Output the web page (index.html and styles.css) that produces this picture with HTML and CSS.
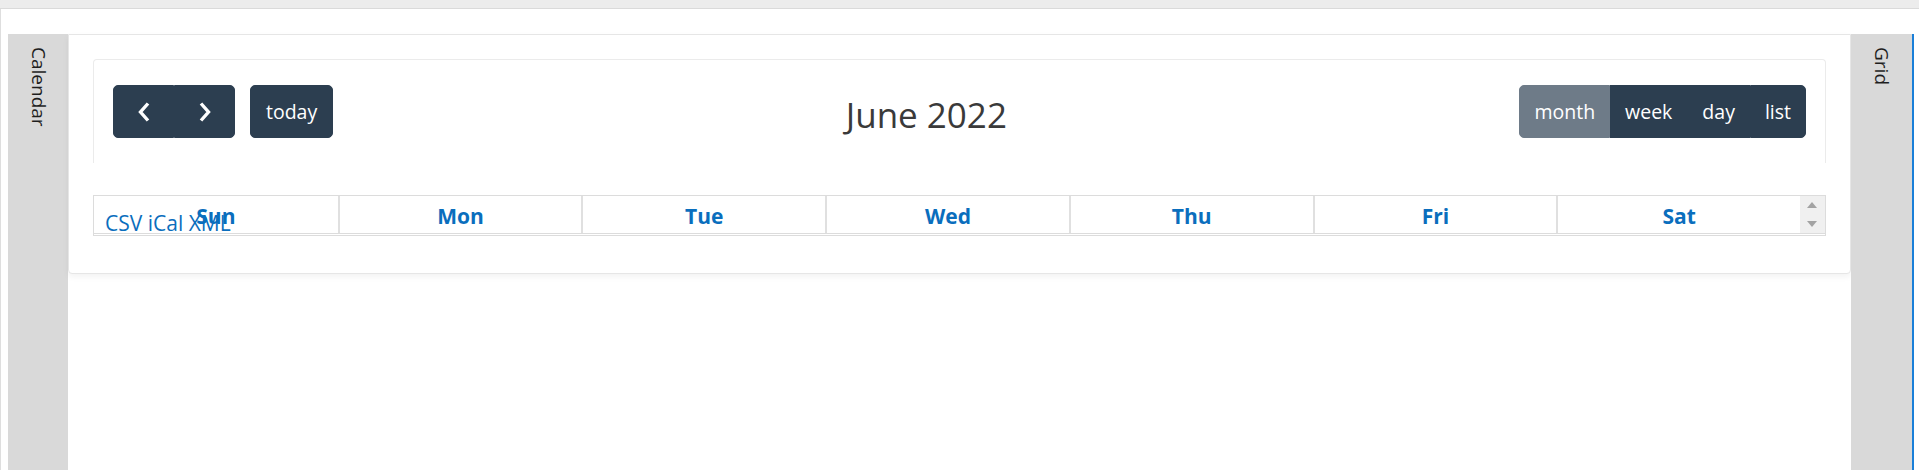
FILE: index.html
```html
<!DOCTYPE html>
<html lang="en">
<head>
<meta charset="utf-8">
<title>Calendar</title>
<link rel="stylesheet" href="styles.css">
</head>
<body>
<div class="topbar"></div>
<div class="frame">
  <aside class="tab tab-left"><span class="tab-label">Calendar</span></aside>
  <main class="main">
    <section class="panel">
      <div class="fc">
        <div class="toolbar">
          <div class="chunk">
            <div class="btn-group">
              <button class="btn icon-btn" aria-label="prev"><svg width="16" height="22" viewBox="0 0 16 22"><polyline points="12,2.5 4.5,11 12,19.5" fill="none" stroke="#fff" stroke-width="3.4"/></svg></button>
              <button class="btn icon-btn" aria-label="next"><svg width="16" height="22" viewBox="0 0 16 22"><polyline points="4,2.5 11.5,11 4,19.5" fill="none" stroke="#fff" stroke-width="3.4"/></svg></button>
            </div>
            <button class="btn today">today</button>
          </div>
          <h2 class="title">June 2022</h2>
          <div class="btn-group">
            <button class="btn view active">month</button>
            <button class="btn view">week</button>
            <button class="btn view">day</button>
            <button class="btn view">list</button>
          </div>
        </div>
        <div class="table">
          <div class="head">
            <div class="days">
              <div class="day">Sun</div>
              <div class="day">Mon</div>
              <div class="day">Tue</div>
              <div class="day">Wed</div>
              <div class="day">Thu</div>
              <div class="day">Fri</div>
              <div class="day">Sat</div>
            </div>
            <div class="scroll"><span class="arr up"></span><span class="arr down"></span></div>
          </div>
        </div>
        <div class="exports"><a href="#">CSV</a> <a href="#">iCal</a> <a href="#">XML</a></div>
      </div>
    </section>
  </main>
  <aside class="tab tab-right"><span class="tab-label">Grid</span></aside>
</div>
</body>
</html>
```
FILE: styles.css
```css
html, body {
  margin: 0;
  padding: 0;
  background: #fff;
}
body {
  font-family: "Open Sans", "Noto Sans", sans-serif;
  font-size: 19px;
  color: #212529;
}
.topbar {
  height: 8px;
  background: #ececec;
  border-bottom: 1px solid #dadada;
}
.frame {
  display: flex;
  height: 461px;
  box-sizing: border-box;
  border-left: 1px solid #dedede;
  padding: 25px 5px 0 7px;
}
.tab {
  flex: none;
  background: #d9d9d9;
  display: flex;
  justify-content: center;
  align-items: flex-start;
  padding-top: 13px;
  box-sizing: border-box;
}
.tab-left { width: 60px; }
.tab-right {
  width: 63px;
  border-right: 2px solid #1a7fd8;
}
.tab-label {
  writing-mode: vertical-rl;
  font-size: 19px;
  line-height: 19px;
  color: #1e1e1e;
}
.main {
  flex: 1;
  min-width: 0;
}
.panel {
  background: #fff;
  border: 1px solid #e6e6e6;
  border-radius: 0 0 4px 4px;
  box-shadow: 0 3px 6px rgba(0, 0, 0, 0.05);
  padding: 24px 24px 37px;
}
.fc {
  position: relative;
}
.toolbar {
  display: flex;
  justify-content: space-between;
  align-items: center;
  border: 1px solid #ebebeb;
  border-bottom: 0;
  border-radius: 4px 4px 0 0;
  padding: 25px 19px;
  margin-bottom: 32px;
}
.chunk {
  display: flex;
  align-items: center;
  gap: 15px;
}
.btn-group {
  display: flex;
}
.btn {
  height: 53px;
  box-sizing: border-box;
  background: #2c3e50;
  border: 1px solid #2c3e50;
  color: #fff;
  font-family: inherit;
  font-size: 19.5px;
  padding: 0 15px;
  border-radius: 5px;
  display: flex;
  align-items: center;
  justify-content: center;
}
.btn.view { padding: 0 14px; }
.btn-group .btn { border-radius: 0; }
.btn-group .btn:first-child { border-radius: 5px 0 0 5px; }
.btn-group .btn:last-child { border-radius: 0 5px 5px 0; }
.icon-btn {
  width: 61px;
  padding: 0;
}
.btn.active {
  background: #6e7b88;
  border-color: #6e7b88;
}
.title {
  margin: 0;
  padding-top: 6px;
  font-size: 35px;
  line-height: 44px;
  font-weight: 400;
  color: #3a3a3a;
}
.table {
  border: 1px solid #dcdcdc;
}
.head {
  display: flex;
  border-bottom: 1px solid #dcdcdc;
  margin-bottom: 1px;
}
.days {
  flex: 1;
  display: grid;
  grid-template-columns: repeat(7, 1fr);
}
.day {
  height: 37px;
  box-sizing: border-box;
  padding-top: 3px;
  display: flex;
  align-items: center;
  justify-content: center;
  font-size: 21px;
  font-weight: 700;
  color: #0a6ebd;
  border-left: 2px solid #e0e0e0;
}
.day:first-child { border-left: 0; }
.scroll {
  width: 25px;
  background: #f0f0f0;
  position: relative;
}
.arr {
  position: absolute;
  left: 7px;
  width: 0;
  height: 0;
  border-left: 5px solid transparent;
  border-right: 5px solid transparent;
}
.arr.up {
  top: 6px;
  border-bottom: 6px solid #a3a3a3;
}
.arr.down {
  top: 25px;
  border-top: 6px solid #a3a3a3;
}
.exports {
  position: absolute;
  left: 12px;
  top: 150px;
  font-size: 21px;
  line-height: 28px;
}
.exports a {
  color: #0a6ebd;
  text-decoration: none;
}
```
